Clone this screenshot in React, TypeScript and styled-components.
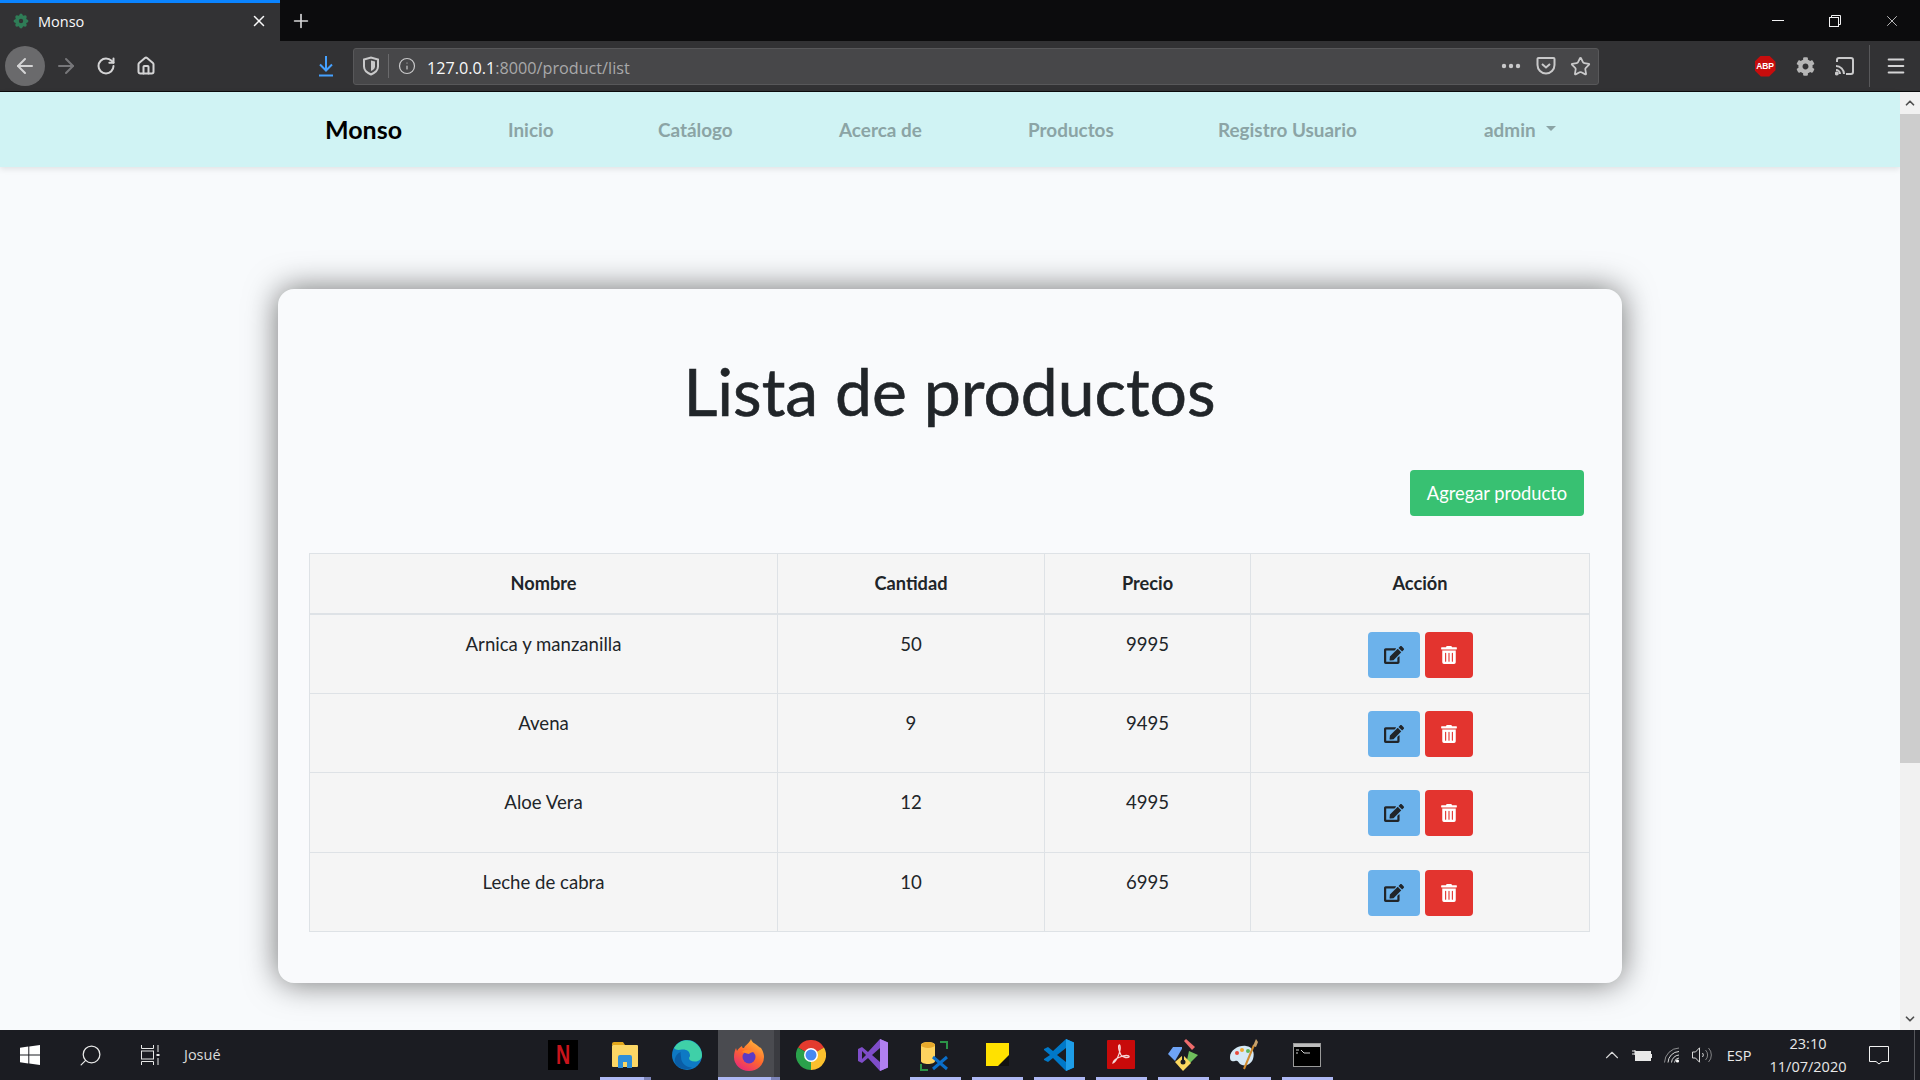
import React from 'react';
import styled, { createGlobalStyle } from 'styled-components';
import { ArrowLeft, ArrowRight, RotateCw, Home, Info, Star, Menu, X, Plus, Search, ChevronUp, ChevronDown } from 'lucide-react';
import { FaEdit, FaTrashAlt, FaCog } from 'react-icons/fa';

const GlobalStyle = createGlobalStyle`
  html, body { margin: 0; padding: 0; height: 100%; overflow: hidden; }
  body { font-family: Lato, "Noto Sans", sans-serif; color: #212529; }
  * { box-sizing: border-box; }
`;

const products = [
  { name: 'Arnica y manzanilla', qty: 50, price: 9995 },
  { name: 'Avena', qty: 9, price: 9495 },
  { name: 'Aloe Vera', qty: 12, price: 4995 },
  { name: 'Leche de cabra', qty: 10, price: 6995 },
];

const Screen = styled.div`
  width: 1920px;
  height: 1080px;
  display: flex;
  flex-direction: column;
  overflow: hidden;
`;

/* browser chrome */
const TabStrip = styled.div`
  height: 41px;
  flex: none;
  background: #0c0c0d;
  display: flex;
  align-items: stretch;
`;
const Tab = styled.div`
  width: 280px;
  background: #323234;
  border-top: 3px solid #0a84ff;
  display: flex;
  align-items: center;
  padding: 0 12px 2px 13px;
  color: #f9f9fa;
  font: 400 14.5px "Open Sans", sans-serif;
`;
const TabTitle = styled.span`
  margin-left: 9px;
  flex: 1;
`;
const NewTab = styled.div`
  width: 42px;
  display: flex;
  align-items: center;
  justify-content: center;
  color: #d7d7d8;
`;
const WindowControls = styled.div`
  margin-left: auto;
  display: flex;
`;
const WindowButton = styled.div`
  width: 57px;
  display: flex;
  align-items: center;
  justify-content: center;
  color: #f2f2f2;
`;
const MinimizeBar = styled.span`
  width: 12px;
  height: 1px;
  background: #f2f2f2;
`;
const Toolbar = styled.div`
  height: 51px;
  flex: none;
  background: #323234;
  border-bottom: 1px solid #0c0c0d;
  display: flex;
  align-items: center;
  padding: 0 4px 0 5px;
`;
const ToolButton = styled.div<{ $round?: boolean; $color?: string }>`
  width: 40px;
  height: 40px;
  flex: none;
  border-radius: ${(p) => (p.$round ? '50%' : '0')};
  background: ${(p) => (p.$round ? '#6a6a6c' : 'transparent')};
  color: ${(p) => p.$color || '#d4d4d5'};
  display: flex;
  align-items: center;
  justify-content: center;
  margin-right: ${(p) => (p.$round ? '1px' : '0')};
`;
const Spacer = styled.div<{ $w: number }>`
  width: ${(p) => p.$w}px;
  flex: none;
`;
const UrlBar = styled.div`
  width: 1246px;
  height: 37px;
  flex: none;
  margin-left: 7px;
  background: #474749;
  border: 1px solid #58585a;
  border-radius: 3px;
  display: flex;
  align-items: center;
  color: #c9c9ca;
`;
const UrlIcon = styled.div<{ $w: number }>`
  width: ${(p) => p.$w}px;
  height: 100%;
  flex: none;
  display: flex;
  align-items: center;
  justify-content: center;
`;
const UrlDivider = styled.div`
  width: 1px;
  height: 24px;
  background: #6a6a6c;
  flex: none;
`;
const UrlText = styled.div`
  flex: 1;
  margin-left: 2px;
  padding-top: 3px;
  font: 400 16.2px "Open Sans", sans-serif;
  color: #a9a9aa;
`;
const UrlHost = styled.span`
  color: #f9f9fa;
`;
const ToolDivider = styled.div`
  width: 1px;
  height: 42px;
  background: #58585a;
  margin: 0 6px 0 4px;
  flex: none;
`;
const AbpBadge = styled.span`
  width: 21px;
  height: 21px;
  background: #c70d0d;
  clip-path: polygon(30% 0, 70% 0, 100% 30%, 100% 70%, 70% 100%, 30% 100%, 0 70%, 0 30%);
  color: #fff;
  font: 700 8.5px/21px "Liberation Sans", sans-serif;
  letter-spacing: -0.2px;
  text-align: center;
`;

/* page */
const Viewport = styled.div`
  flex: 1;
  min-height: 0;
  display: flex;
`;
const Page = styled.div`
  flex: 1;
  min-width: 0;
  background: #f8fafc;
`;
const NavBar = styled.nav`
  height: 75px;
  background: #d0f3f4;
  box-shadow: 0 2px 6px rgba(0, 0, 0, 0.1);
  display: flex;
  align-items: center;
  padding: 0 0 1px 325px;
`;
const Brand = styled.a`
  width: 183px;
  font-size: 25px;
  font-weight: 700;
  color: #000;
`;
const NavLink = styled.a<{ $w: number }>`
  width: ${(p) => p.$w}px;
  font-size: 18.9px;
  font-weight: 700;
  color: #8ba4a5;
  display: flex;
  align-items: center;
`;
const Caret = styled.span`
  width: 0;
  height: 0;
  margin-left: 10px;
  margin-top: -2px;
  border-top: 5px solid #8ba4a5;
  border-left: 5px solid transparent;
  border-right: 5px solid transparent;
`;
const Card = styled.main`
  width: 1344px;
  height: 694px;
  margin: 122px auto 0;
  padding: 0 32px 0 31px;
  background: #f9fafc;
  border-radius: 16px;
  box-shadow: 0 0 32px rgba(0, 0, 0, 0.55);
`;
const Title = styled.h1`
  margin: 0;
  padding-top: 64px;
  height: 181px;
  text-align: center;
  font-size: 66px;
  line-height: 76px;
  font-weight: 400;
  -webkit-text-stroke: 0.6px #212529;
  color: #212529;
`;
const ActionBar = styled.div`
  display: flex;
  justify-content: flex-end;
  padding-right: 6px;
  margin-bottom: 37px;
`;
const AddButton = styled.button`
  width: 174px;
  height: 46px;
  border: none;
  border-radius: 4px;
  padding: 0 0 1px;
  background: #38c172;
  color: #fff;
  font: 400 18.3px Lato, sans-serif;
`;
const Table = styled.table`
  width: 1280px;
  border-collapse: collapse;
  table-layout: fixed;
  background: #f5f5f5;
  font-size: 18.6px;
`;
const Th = styled.th<{ $w: number }>`
  width: ${(p) => p.$w}px;
  height: 60px;
  border: 1px solid #dee2e6;
  border-bottom-width: 2px;
  font-weight: 700;
  font-size: 18.2px;
  text-align: center;
  padding: 0;
`;
const Td = styled.td`
  height: 79.5px;
  border: 1px solid #dee2e6;
  padding: 17px 0 0;
  text-align: center;
  vertical-align: top;
  line-height: 24px;
`;
const ActionTd = styled(Td)`
  padding-top: 2px;
  vertical-align: middle;
`;
const ButtonGroup = styled.div`
  display: flex;
  justify-content: center;
  gap: 5px;
`;
const IconButton = styled.button<{ $bg: string; $fg: string; $w: number }>`
  width: ${(p) => p.$w}px;
  height: 46px;
  padding: 0;
  border: none;
  border-radius: 4px;
  background: ${(p) => p.$bg};
  color: ${(p) => p.$fg};
  display: flex;
  align-items: center;
  justify-content: center;
`;

/* scrollbar */
const ScrollBar = styled.div`
  width: 20px;
  flex: none;
  background: #f1f1f1;
  display: flex;
  flex-direction: column;
`;
const ScrollArrow = styled.div`
  height: 22px;
  flex: none;
  display: flex;
  align-items: center;
  justify-content: center;
  color: #505050;
`;
const ScrollThumb = styled.div`
  height: 649px;
  flex: none;
  background: #cdcdcd;
  margin-bottom: auto;
`;

/* taskbar */
const TaskBar = styled.footer`
  height: 50px;
  flex: none;
  background: #1b1c22;
  display: flex;
  align-items: center;
  color: #e8e8e8;
`;
const TaskTool = styled.div`
  width: 60px;
  height: 100%;
  flex: none;
  display: flex;
  align-items: center;
  justify-content: center;
`;
const UserName = styled.span`
  width: 352px;
  flex: none;
  font: 400 14.5px "Open Sans", sans-serif;
  padding: 0 0 1px 4px;
  color: #dcdcdc;
`;
const TaskApp = styled.div<{ $open?: boolean; $active?: boolean; $stacked?: boolean }>`
  position: relative;
  width: 62px;
  height: 100%;
  flex: none;
  padding-bottom: 1px;
  display: flex;
  align-items: center;
  justify-content: center;
  background: ${(p) =>
    p.$active ? 'linear-gradient(90deg, #4a4b50 90%, #3a3b40 90%)' : 'transparent'};
  &::after {
    content: '';
    display: ${(p) => (p.$open ? 'block' : 'none')};
    position: absolute;
    left: ${(p) => (p.$active ? '0' : '6px')};
    right: ${(p) => (p.$active ? '0' : '5px')};
    bottom: 0;
    height: 3px;
    background: ${(p) =>
      p.$stacked ? 'linear-gradient(90deg, #aeb8f4 86%, #7c84b8 86%)' : '#aeb8f4'};
  }
`;
const NetflixTile = styled.span`
  width: 30px;
  height: 30px;
  background: #000;
  color: #c8141c;
  font: 700 28px/30px "Liberation Sans", sans-serif;
  text-align: center;
`;
const NetflixLetter = styled.span`
  display: inline-block;
  transform: scaleX(0.7);
`;
const Tray = styled.div`
  position: relative;
  margin-left: auto;
  height: 100%;
  display: flex;
  align-items: center;
  padding-right: 19px;
  &::after {
    content: '';
    position: absolute;
    top: 0;
    right: 5px;
    bottom: 0;
    width: 1px;
    background: #55565b;
  }
`;
const TrayIcon = styled.div<{ $w: number }>`
  width: ${(p) => p.$w}px;
  display: flex;
  align-items: center;
  justify-content: center;
  color: #d8d8d8;
`;
const TrayLang = styled.span`
  width: 40px;
  margin-left: 2px;
  text-align: center;
  font: 400 14.5px "Open Sans", sans-serif;
`;
const Clock = styled.div`
  width: 98px;
  text-align: center;
  font: 400 14.5px/23px "Open Sans", sans-serif;
`;

const Favicon = () => (
  <svg width="16" height="16" viewBox="0 0 16 16">
    {[0, 45, 90, 135].map((a) => (
      <ellipse key={a} cx="8" cy="8" rx="3" ry="7.5" fill="#2f7d57" transform={`rotate(${a} 8 8)`} />
    ))}
    <circle cx="8" cy="8" r="2.2" fill="#323234" />
  </svg>
);

const ShieldIcon = () => (
  <svg width="18" height="20" viewBox="0 0 18 20" fill="none" stroke="#c9c9ca" strokeWidth="2">
    <path d="M2 3.5 9 1.5l7 2v7c0 4-3.5 6.5-7 8-3.500-1.500-7-4-7-8z" />
    <path d="M9 4.500l4 1v5c0 2-2 3.500-4 4.500z" fill="#c9c9ca" stroke="none" />
  </svg>
);

const DownloadIcon = () => (
  <svg width="18" height="22" viewBox="0 0 18 22" fill="none" stroke="#45a1ff" strokeWidth="2">
    <path d="M9 1v14M3 9.500l6 6 6-6" />
    <path d="M2 20.500h14" />
  </svg>
);

const PocketIcon = () => (
  <svg width="20" height="20" viewBox="0 0 20 20" fill="none" stroke="#c9c9ca" strokeWidth="2">
    <path d="M2.500 2h15a1 1 0 0 1 1 1v6a8.500 8.500 0 0 1-17 0V3a1 1 0 0 1 1-1z" />
    <path d="m6 8 4 3.500L14 8" />
  </svg>
);

const CastIcon = () => (
  <svg width="20" height="20" viewBox="0 0 20 20" fill="none" stroke="#c9c9ca" strokeWidth="2">
    <path d="M2 6V4a2 2 0 0 1 2-2h12a2 2 0 0 1 2 2v12a2 2 0 0 1-2 2h-5" />
    <path d="M1 10a8 8 0 0 1 8 8M1 14a4 4 0 0 1 4 4" />
    <circle cx="1.800" cy="17.500" r="1" fill="#c9c9ca" />
  </svg>
);

const RestoreIcon = () => (
  <svg width="12" height="12" viewBox="0 0 12 12" fill="none" stroke="#f2f2f2">
    <rect x="0.500" y="2.500" width="9" height="9" />
    <path d="M2.500 2.500v-2h9v9h-2" />
  </svg>
);

const WindowsLogo = () => (
  <svg width="20" height="20" viewBox="0 0 20 20" fill="#fff">
    <path d="M0 2.800 8.300 1.600v7.800H0zM9.300 1.500 20 0v9.400H9.300zM0 10.400h8.300v8L0 17.200zM9.300 10.400H20V20L9.300 18.500z" />
  </svg>
);

const TaskViewIcon = () => (
  <svg width="20" height="20" viewBox="0 0 20 20" fill="none" stroke="#e8e8e8">
    <path d="M1.500 0v3.500h12V0M1.500 20v-3.500h12V20" />
    <rect x="1.500" y="6" width="12" height="8" />
    <path d="M18 0v7M18 13v7" />
    <path d="M18 9v2" strokeWidth="3" />
  </svg>
);

const FolderLogo = () => (
  <svg width="28" height="30" viewBox="0 0 28 30">
    <path d="M1 4a2 2 0 0 1 2-2h9l2 3h-13z" fill="#e2a71b" />
    <rect x="1" y="5" width="26" height="22" rx="1" fill="#fbd665" />
    <path d="M7 28V17a2 2 0 0 1 2-2h10a2 2 0 0 1 2 2v11h-5v-6h-4v6z" fill="#2f8fd8" />
  </svg>
);

const EdgeLogo = () => (
  <svg width="30" height="30" viewBox="0 0 30 30">
    <circle cx="15" cy="15" r="15" fill="#0e79c4" />
    <path d="M2 8C6 1 13-1 19 .7c6 2 11 8 11 14.300 0 4-3 6.500-7 6.500-4 0-6-1.500-6-3.500 0-1 1-1 1-2.500C18 11 14 9 10 9.500 7 10 4 10.500 2 8z" fill="#3fd0a8" />
    <path d="M9 17c0 6 5 10.500 11 10.500-3 2.500-12 3-16.500-4C1 19 5 13 9 12c-1 1.500 0 3 0 5z" fill="#0a5da6" />
  </svg>
);

const FirefoxLogo = () => (
  <svg width="30" height="32" viewBox="0 0 30 32">
    <defs>
      <linearGradient id="ffx" x1="0.800" y1="0" x2="0.200" y2="1">
        <stop offset="0" stopColor="#ffbd3e" />
        <stop offset="0.500" stopColor="#ff6a2c" />
        <stop offset="1" stopColor="#e8247c" />
      </linearGradient>
    </defs>
    <path d="M17 0c1 4 4 4 7 7 1 1 3 2 3 2 2 3 3 6 3 9a15 14 0 0 1-30 0c0-4 1-7 2-9l1 3c1-2 3-4 5-5 0 2 1 2 2 2 1-3 5-4 7-9z" fill="url(#ffx)" />
    <circle cx="15" cy="18" r="6.500" fill="#5b3bc4" />
    <path d="M8 13c3-3 9-3 12 0-3 0-4 1-5 2-3-1-5-1-7-2z" fill="#ff8a2a" />
  </svg>
);

const ChromeLogo = () => (
  <svg width="30" height="30" viewBox="0 0 30 30">
    <path d="M15 15 2 7.500A15 15 0 0 1 28 7.500z" fill="#e33b2e" />
    <path d="M15 15 28 7.500A15 15 0 0 1 15 30z" fill="#fbc02d" />
    <path d="M15 15V30A15 15 0 0 1 2 7.500z" fill="#2aa14b" />
    <circle cx="15" cy="15" r="7" fill="#fff" />
    <circle cx="15" cy="15" r="5.500" fill="#4688f1" />
  </svg>
);

const VisualStudioLogo = () => (
  <svg width="30" height="32" viewBox="0 0 30 32">
    <path d="M22 0 30 3.500v25L22 32 10 19l-6 5-4-2V10l4-2 6 5z" fill="#7f4dc9" />
    <path d="M22 0 30 3.500v25L22 32z" fill="#b180f0" />
    <path d="M4 12v8l4-4z M22 9l-8 7 8 7z" fill="#1b1c22" />
  </svg>
);

const DatabaseLogo = () => (
  <svg width="30" height="32" viewBox="0 0 30 32" fill="none">
    <path d="M1 6c0-4 14-4 14 0v16c0 4-14 4-14 0z" fill="#fdd35f" />
    <ellipse cx="8" cy="6" rx="7" ry="3" fill="#e7a92c" />
    <path d="M20 3h7v7M1 25v6h7" stroke="#2b9348" strokeWidth="2" />
    <path d="m13 18 14 12M27 18 13 30" stroke="#0a6ec9" strokeWidth="3" />
  </svg>
);

const StickyLogo = () => (
  <svg width="23" height="23" viewBox="0 0 23 23">
    <rect width="23" height="23" fill="#ffe100" />
    <path d="M12 23 23 12v11z" fill="#111" />
  </svg>
);

const VSCodeLogo = () => (
  <svg width="30" height="32" viewBox="0 0 30 32">
    <path d="M22 0 30 3.500v25L22 32 9 19l-5 4-4-2v-1l6-4-6-5v-1l4-2 5 4z" fill="#0078c8" />
    <path d="M22 0 30 3.500v25L22 32z" fill="#1e9de8" />
    <path d="M22 9 13 16l9 7z" fill="#1b1c22" />
  </svg>
);

const AcrobatLogo = () => (
  <svg width="28" height="29" viewBox="0 0 28 29" fill="none">
    <rect width="28" height="29" rx="1" fill="#c80a0a" />
    <path d="M6 23c4-2 8-12 7-17-1-3-3 1 1 9 2 3 7 3 8 2 1-2-5-2-9 0-3 1-7 4-7 6z" stroke="#f6d5d5" strokeWidth="1.300" />
  </svg>
);

const GitLogo = () => (
  <svg width="30" height="32" viewBox="0 0 30 32">
    <path d="M15 8H5L0 15l7 7z" fill="#6ea3f5" />
    <path d="M16 2 18 0l9 8-3 3z" fill="#ef6c6c" />
    <path d="M21 12 30 16l-8 8-3-3z" fill="#6fbf5c" />
    <path d="M7 23l8-7 8 8-8 8z" fill="#fad75f" />
    <path d="M15 6v18" stroke="#1b1c22" strokeWidth="2" />
    <circle cx="15" cy="23" r="2.500" fill="#1b1c22" />
  </svg>
);

const PaintLogo = () => (
  <svg width="30" height="32" viewBox="0 0 30 32">
    <path d="M0 18C0 11 9 6 16 7c7 1 9 7 7 13s-9 8-13 5c-2-2-2-4-5-3-2 .5-5 1-5-4z" fill="#d5e8f5" />
    <circle cx="7" cy="14" r="2" fill="#e94b3c" />
    <circle cx="12" cy="11" r="2" fill="#f2a72e" />
    <circle cx="18" cy="12" r="2" fill="#5db85c" />
    <path d="M14 30 24 6" stroke="#d08a2d" strokeWidth="2" />
    <path d="M23 7 26 0l2 3-2 5z" fill="#c9a26a" />
  </svg>
);

const ConsoleLogo = () => (
  <svg width="28" height="24" viewBox="0 0 28 24">
    <rect x="0.500" y="0.500" width="27" height="23" fill="#000" stroke="#9a9a9a" />
    <rect x="1" y="1" width="26" height="3" fill="#bdbdbd" />
    <path d="M3 7h3M3 10h2M8 7l3 3h6" stroke="#d0d0d0" fill="none" />
  </svg>
);

const BatteryIcon = () => (
  <svg width="20" height="13" viewBox="0 0 20 13" fill="none" stroke="#e8e8e8">
    <path d="M0 2h3M0 5h3" />
    <path d="M3 1v5M3 4h3" />
    <rect x="3.500" y="2.500" width="15" height="9" fill="#e8e8e8" />
    <path d="M19.500 5v4" />
  </svg>
);

const WifiIcon = () => (
  <svg width="16" height="16" viewBox="0 0 16 16" fill="none" stroke="#d8d8d8">
    <path d="M.500 15.500A15 15 0 0 1 15 1" opacity="0.600" />
    <path d="M4 15.500A11.500 11.500 0 0 1 15 4.500" />
    <path d="M7.500 15.500A8 8 0 0 1 15 8" />
    <path d="M10.500 15.500A5 5 0 0 1 15 11" />
    <circle cx="13.500" cy="14" r="1.600" fill="#ffffff" stroke="none" />
  </svg>
);

const SpeakerIcon = () => (
  <svg width="20" height="16" viewBox="0 0 20 16" fill="none" stroke="#d8d8d8">
    <path d="M.500 5h3L7.500.800v14.400L3.500 11h-3z" />
    <path d="M10.500 6a3 3 0 0 1 0 4" />
    <path d="M13.500 3a7 7 0 0 1 0 10" opacity="0.550" />
    <path d="M16.500 1a10 10 0 0 1 0 14" opacity="0.550" />
  </svg>
);

const NotificationIcon = () => (
  <svg width="20" height="19" viewBox="0 0 20 19" fill="none" stroke="#f2f2f2">
    <path d="M.500.500h19v15H13L10 18l-3-2.500H.500z" />
  </svg>
);

const apps = [
  { key: 'netflix', node: <NetflixTile><NetflixLetter>N</NetflixLetter></NetflixTile> },
  { key: 'folder', node: <FolderLogo />, open: true, stacked: true },
  { key: 'edge', node: <EdgeLogo /> },
  { key: 'firefox', node: <FirefoxLogo />, open: true, active: true, stacked: true },
  { key: 'chrome', node: <ChromeLogo /> },
  { key: 'vs', node: <VisualStudioLogo /> },
  { key: 'db', node: <DatabaseLogo />, open: true },
  { key: 'sticky', node: <StickyLogo />, open: true },
  { key: 'vscode', node: <VSCodeLogo />, open: true },
  { key: 'acrobat', node: <AcrobatLogo />, open: true },
  { key: 'git', node: <GitLogo />, open: true },
  { key: 'paint', node: <PaintLogo />, open: true },
  { key: 'console', node: <ConsoleLogo />, open: true },
];

const App = () => {
  return (
    <Screen>
      <GlobalStyle />
      <TabStrip>
        <Tab>
          <Favicon />
          <TabTitle>Monso</TabTitle>
          <X size={18} strokeWidth={2} />
        </Tab>
        <NewTab>
          <Plus size={22} strokeWidth={1.8} />
        </NewTab>
        <WindowControls>
          <WindowButton>
            <MinimizeBar />
          </WindowButton>
          <WindowButton>
            <RestoreIcon />
          </WindowButton>
          <WindowButton>
            <X size={18} strokeWidth={1} />
          </WindowButton>
        </WindowControls>
      </TabStrip>
      <Toolbar>
        <ToolButton $round>
          <ArrowLeft size={24} />
        </ToolButton>
        <ToolButton $color="#77777a">
          <ArrowRight size={24} />
        </ToolButton>
        <ToolButton>
          <RotateCw size={20} strokeWidth={2.4} />
        </ToolButton>
        <ToolButton>
          <Home size={20} strokeWidth={2.4} />
        </ToolButton>
        <Spacer $w={140} />
        <ToolButton>
          <DownloadIcon />
        </ToolButton>
        <UrlBar>
          <UrlIcon $w={34}>
            <ShieldIcon />
          </UrlIcon>
          <UrlDivider />
          <UrlIcon $w={36}>
            <Info size={18} strokeWidth={1.6} />
          </UrlIcon>
          <UrlText>
            <UrlHost>127.0.0.1</UrlHost>:8000/product/list
          </UrlText>
          <UrlIcon $w={35}>
            <svg width="20" height="6" viewBox="0 0 20 6" fill="#c9c9ca">
              <circle cx="3" cy="3" r="2.200" />
              <circle cx="10" cy="3" r="2.200" />
              <circle cx="17" cy="3" r="2.200" />
            </svg>
          </UrlIcon>
          <UrlIcon $w={35}>
            <PocketIcon />
          </UrlIcon>
          <UrlIcon $w={35}>
            <Star size={21} strokeWidth={2} />
          </UrlIcon>
        </UrlBar>
        <Spacer $w={146} />
        <ToolButton>
          <AbpBadge>ABP</AbpBadge>
        </ToolButton>
        <ToolButton>
          <FaCog size={19} color="#b5b5b5" />
        </ToolButton>
        <ToolButton>
          <CastIcon />
        </ToolButton>
        <ToolDivider />
        <ToolButton>
          <Menu size={22} strokeWidth={2.2} />
        </ToolButton>
      </Toolbar>
      <Viewport>
        <Page>
          <NavBar>
            <Brand>Monso</Brand>
            <NavLink $w={150}>Inicio</NavLink>
            <NavLink $w={181}>Catálogo</NavLink>
            <NavLink $w={189}>Acerca de</NavLink>
            <NavLink $w={190}>Productos</NavLink>
            <NavLink $w={266}>Registro Usuario</NavLink>
            <NavLink $w={90}>
              admin
              <Caret />
            </NavLink>
          </NavBar>
          <Card>
            <Title>Lista de productos</Title>
            <ActionBar>
              <AddButton>Agregar producto</AddButton>
            </ActionBar>
            <Table>
              <thead>
                <tr>
                  <Th $w={468}>Nombre</Th>
                  <Th $w={267}>Cantidad</Th>
                  <Th $w={206}>Precio</Th>
                  <Th $w={339}>Acción</Th>
                </tr>
              </thead>
              <tbody>
                {products.map((p) => (
                  <tr key={p.name}>
                    <Td>{p.name}</Td>
                    <Td>{p.qty}</Td>
                    <Td>{p.price}</Td>
                    <ActionTd>
                      <ButtonGroup>
                        <IconButton $bg="#6cb2eb" $fg="#212529" $w={52}>
                          <FaEdit size={20} />
                        </IconButton>
                        <IconButton $bg="#e3342f" $fg="#fff" $w={48}>
                          <FaTrashAlt size={18} />
                        </IconButton>
                      </ButtonGroup>
                    </ActionTd>
                  </tr>
                ))}
              </tbody>
            </Table>
          </Card>
        </Page>
        <ScrollBar>
          <ScrollArrow>
            <ChevronUp size={14} strokeWidth={3} />
          </ScrollArrow>
          <ScrollThumb />
          <ScrollArrow>
            <ChevronDown size={14} strokeWidth={3} />
          </ScrollArrow>
        </ScrollBar>
      </Viewport>
      <TaskBar>
        <TaskTool>
          <WindowsLogo />
        </TaskTool>
        <TaskTool>
          <Search size={25} strokeWidth={1.2} style={{ transform: 'scaleX(-1)' }} />
        </TaskTool>
        <TaskTool>
          <TaskViewIcon />
        </TaskTool>
        <UserName>Josué</UserName>
        {apps.map((a) => (
          <TaskApp key={a.key} $open={a.open} $active={a.active} $stacked={a.stacked}>
            {a.node}
          </TaskApp>
        ))}
        <Tray>
          <TrayIcon $w={30}>
            <ChevronUp size={22} strokeWidth={1.2} />
          </TrayIcon>
          <TrayIcon $w={30}>
            <BatteryIcon />
          </TrayIcon>
          <TrayIcon $w={30}>
            <WifiIcon />
          </TrayIcon>
          <TrayIcon $w={30}>
            <SpeakerIcon />
          </TrayIcon>
          <TrayLang>ESP</TrayLang>
          <Clock>
            23:10
            <br />
            11/07/2020
          </Clock>
          <TrayIcon $w={44}>
            <NotificationIcon />
          </TrayIcon>
        </Tray>
      </TaskBar>
    </Screen>
  );
};

export default App;
